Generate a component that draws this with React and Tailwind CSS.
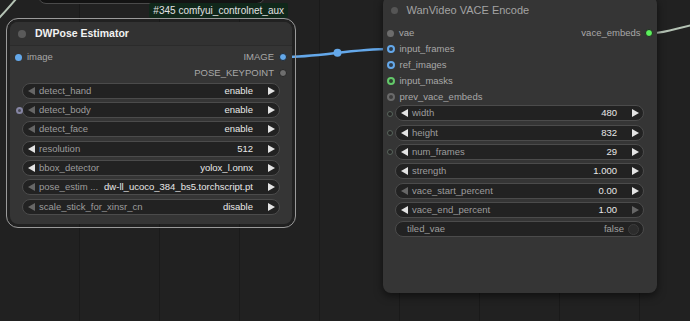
const FONT = "font-['Liberation_Sans',Arial,sans-serif]";

function Tri({ dir, on }) {
  return (
    <svg width="7" height="8" viewBox="0 0 7 8" className="shrink-0">
      <path d={dir === 'l' ? 'M7 0L0 4L7 8Z' : 'M0 0L7 4L0 8Z'} fill={on ? '#e4e4e4' : '#666'} />
    </svg>
  );
}

function Widget({ label, value, l = true, r = true, socket }) {
  return (
    <div className="relative flex h-[16px] items-center rounded-full border border-[#4b4b4b] bg-[#222] pl-[5px] pr-[4px] leading-[14px]">
      {socket}
      <Tri dir="l" on={l} />
      <span className="ml-[4px] whitespace-nowrap text-[#9d9d9d]">{label}</span>
      <span className="ml-auto mr-[15px] whitespace-nowrap text-[#e8e8e8]">{value}</span>
      <Tri dir="r" on={r} />
    </div>
  );
}

function Toggle({ label, value }) {
  return (
    <div className="flex h-[16px] items-center rounded-full border border-[#4b4b4b] bg-[#222] pl-[11px] pr-[4px] leading-[14px]">
      <span className="text-[#9d9d9d]">{label}</span>
      <span className="ml-auto mr-[4px] text-[#a0a0a0]">{value}</span>
      <span className="h-[11px] w-[11px] rounded-full border border-[#3c3c3c] bg-[#2c2c2c]" />
    </div>
  );
}

// small input socket sitting on a widget's left edge
const BodySocket = (
  <span className="absolute left-[-7px] top-[3.5px] h-[7px] w-[7px] rounded-full border-[2px] border-[#8585a3] bg-[#4a4a55]" />
);
const NumSocket = (
  <span className="absolute left-[-9px] top-[4.5px] h-[6px] w-[6px] rounded-full border border-[#58655c] bg-[#262626]" />
);

const Dot = ({ c }) => <span className="h-[7px] w-[7px] shrink-0 rounded-full" style={{ background: c }} />;
const Ring = ({ c, inner }) => (
  <span className="h-[8px] w-[8px] shrink-0 rounded-full border-[2px]" style={{ borderColor: c, background: inner }} />
);

export default function App() {
  return (
    <div
      className={`relative h-[321px] w-[690px] overflow-hidden bg-[#212121] bg-[linear-gradient(90deg,#1a1a1a_1px,transparent_1px)] bg-[size:80px_80px] bg-[position:79px_0px] ${FONT} text-[9.5px]`}
    >
      {/* node above, only its bottom edge shows */}
      <div className="absolute left-[38px] top-[-20px] h-[24px] w-[227px] rounded-b-[8px] border border-[#4a4a4a] bg-[#131313]" />

      {/* links */}
      <svg className="pointer-events-none absolute inset-0" width="690" height="321">
        <path d="M-2 19 C 4 13, 10 6, 16 -1" stroke="#b4c2b4" strokeWidth="2" fill="none" />
        <path d="M284 57 C 318 57, 352 49, 390 49" stroke="#64a8ea" strokeWidth="2.5" fill="none" />
        <circle cx="337.5" cy="52.7" r="4" fill="#64a8ea" />
        <path d="M652 33 C 668 33, 676 28, 692 25" stroke="#b4c2b4" strokeWidth="2" fill="none" />
      </svg>

      {/* DWPose Estimator */}
      <div className="absolute left-[10px] top-[22px] h-[202px] w-[282px] rounded-[8px] bg-[#353535] outline-[1.5px] outline-solid outline-[#9a9a9a] outline-offset-[3px]">
        <div className="absolute right-[4px] top-[-19px] flex h-[15px] items-center rounded-[2px] bg-[#10271a] px-[4px] text-[10px] text-[#e2e2e2]">
          #345 comfyui_controlnet_aux
        </div>
        <div className="flex h-[24px] items-center rounded-t-[8px] border-b border-[#2b2b2b] bg-[#323232] pl-[8px]">
          <span className="h-[8px] w-[8px] rounded-full bg-[#5a5a5a]" />
          <span className="ml-[9px] text-[10.5px] font-bold text-[#f2f2f2]">DWPose Estimator</span>
        </div>
        <div className="pt-[3px] text-[#a8a8a8]">
          <div className="flex h-[16px] items-center justify-between pl-[5px] pr-[5px]">
            <div className="flex items-center gap-[5px]">
              <Dot c="#64a8ea" />
              <span>image</span>
            </div>
            <div className="flex items-center gap-[5px]">
              <span>IMAGE</span>
              <span className="h-[8px] w-[8px] rounded-full border border-[#1f2a36] bg-[#64a8ea]" />
            </div>
          </div>
          <div className="flex h-[16px] items-center justify-end pr-[5px]">
            <div className="flex items-center gap-[5px]">
              <span>POSE_KEYPOINT</span>
              <span className="h-[8px] w-[8px] rounded-full border border-[#262626] bg-[#6e6e6e]" />
            </div>
          </div>
        </div>
        <div className="mt-[1.7px] flex flex-col gap-[3.33px] px-[12px]">
          <Widget label="detect_hand" value="enable" l={false} />
          <Widget label="detect_body" value="enable" l={false} socket={BodySocket} />
          <Widget label="detect_face" value="enable" l={false} />
          <Widget label="resolution" value="512" />
          <Widget label="bbox_detector" value="yolox_l.onnx" />
          <Widget label="pose_estim ..." value="dw-ll_ucoco_384_bs5.torchscript.pt" l={false} />
          <Widget label="scale_stick_for_xinsr_cn" value="disable" l={false} />
        </div>
      </div>

      {/* WanVideo VACE Encode */}
      <div className="absolute left-[383px] top-[-4px] h-[297px] w-[274px] rounded-[8px] bg-[#353535] shadow-[0_3px_8px_rgba(0,0,0,0.55)]">
        <div className="flex h-[28px] items-center pl-[7.5px]">
          <span className="h-[7px] w-[7px] rounded-full bg-[#555]" />
          <span className="ml-[9px] text-[11px] text-[#a3a3a3]">WanVideo VACE Encode</span>
        </div>
        <div className="pt-[1px] text-[#a8a8a8]">
          <div className="flex h-[16px] items-center justify-between pl-[4px] pr-[4.5px]">
            <div className="flex items-center gap-[5px]">
              <Dot c="#6c6c6c" />
              <span>vae</span>
            </div>
            <div className="flex items-center gap-[4px]">
              <span>vace_embeds</span>
              <span className="h-[8px] w-[8px] rounded-full border border-[#1f2a1f] bg-[#5cf05c]" />
            </div>
          </div>
          <div className="flex h-[16px] items-center gap-[5px] pl-[3.5px]">
            <Ring c="#64a8ea" inner="#2d3b4a" />
            <span>input_frames</span>
          </div>
          <div className="flex h-[16px] items-center gap-[5px] pl-[3.5px]">
            <Ring c="#64a8ea" inner="#2d3b4a" />
            <span>ref_images</span>
          </div>
          <div className="flex h-[16px] items-center gap-[5px] pl-[3.5px]">
            <Ring c="#63c86a" inner="#2d3f2f" />
            <span>input_masks</span>
          </div>
          <div className="flex h-[16px] items-center gap-[5px] pl-[3.5px]">
            <Ring c="#6a6a6a" inner="#3d3d3d" />
            <span>prev_vace_embeds</span>
          </div>
        </div>
        <div className="mt-[0.3px] flex flex-col gap-[3.33px] pl-[12px] pr-[13px]">
          <Widget label="width" value="480" socket={NumSocket} />
          <Widget label="height" value="832" socket={NumSocket} />
          <Widget label="num_frames" value="29" socket={NumSocket} />
          <Widget label="strength" value="1.000" />
          <Widget label="vace_start_percent" value="0.00" l={false} />
          <Widget label="vace_end_percent" value="1.00" r={false} />
          <Toggle label="tiled_vae" value="false" />
        </div>
      </div>
    </div>
  );
}
